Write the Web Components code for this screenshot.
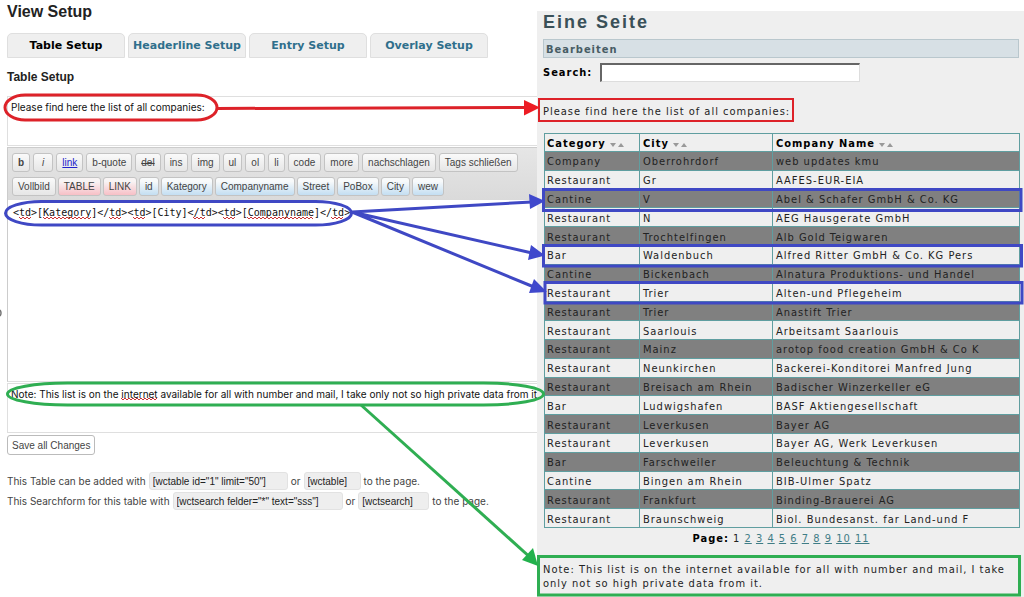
<!DOCTYPE html>
<html lang="en">
<head>
<meta charset="utf-8">
<title>View Setup</title>
<style>
  html, body { margin: 0; background: #fff; overflow-x: hidden; }
</style>
</head>
<body>
<setup-guide></setup-guide>
<script>
const define = (name, html, init) => {
  const tpl = document.createElement('template');
  tpl.innerHTML = html;
  customElements.define(name, class extends HTMLElement {
    constructor() {
      super();
      this.attachShadow({ mode: 'open' }).append(tpl.content.cloneNode(true));
    }
    connectedCallback() { if (init) init(this, this.shadowRoot); }
  });
};

define('setup-tab', `
<style>
  :host { display: block; flex: 0 0 118px; }
  a { display: block; box-sizing: border-box; height: 25px; text-align: center; white-space: nowrap;
      font: bold 11px/24px "DejaVu Sans", sans-serif; color: #2f6f8c; text-decoration: none;
      background: #efefef; border: 1px solid #dfdfdf; border-radius: 5px 5px 0 0; }
  :host([current]) a { color: #000; }
</style>
<a href="#"><slot></slot></a>`);

define('tag-button', `
<style>
  :host { display: block; }
  button { display: block; box-sizing: border-box; height: 19px; padding: 0 5px; margin: 0;
    font: 10px/16px "Liberation Sans", Arial, sans-serif; color: #444; white-space: nowrap;
    background: linear-gradient(#fafafa, #e6e6e6); border: 1px solid #c3c3c3; border-radius: 3px; }
  :host([kind=pink]) button { background: linear-gradient(#f8f4f4 20%, #f7bfc6); }
  :host([kind=blue]) button { background: linear-gradient(#f8fafb 20%, #c3def2); }
  :host([look=b]) button { font-weight: bold; }
  :host([look=i]) button { font-style: italic; padding: 0 8px; }
  :host([look=u]) button { text-decoration: underline; color: #2222cc; }
  :host([look=s]) button { text-decoration: line-through; }
</style>
<button type="button"><slot></slot></button>`);

define('tag-toolbar', `
<style>
  :host { display: flex; flex-direction: column; gap: 5px; padding: 5px 4px 4px; box-sizing: border-box;
    background: linear-gradient(#e6e6e6, #dadada); border-top: 1px solid #ccc; border-left: 1px solid #ccc; }
  div { display: flex; gap: 3px; }
  div + div { gap: 2px; }
</style>
<div><slot name="first"></slot></div>
<div><slot name="second"></slot></div>`);

define('shortcode-line', `
<style>
  :host { display: flex; align-items: center; height: 20px; font: 10px/18px Inter, sans-serif; color: #444; white-space: nowrap; }
  input { box-sizing: border-box; height: 18px; margin: 0 3px; padding: 0 3px; border: 1px solid #e2e2e2; border-radius: 3px;
    background: #eee; font: 10px "Liberation Sans", Arial, sans-serif; color: #222; min-width: 0; }
</style>
<label for="full"></label><input id="full" readonly><label for="short">or</label><input id="short" readonly><span>to the page.</span>`,
(el, root) => {
  const [full, short] = root.querySelectorAll('input');
  root.querySelector('label').textContent = el.getAttribute('text');
  full.value = el.getAttribute('full');
  short.value = el.getAttribute('short');
  full.style.width = el.getAttribute('full-width') + 'px';
  short.style.width = el.getAttribute('short-width') + 'px';
});

define('view-setup', `
<style>
  :host { display: block; padding: 2px 0 0 7px; min-width: 0; overflow: hidden; color: #333; }
  h1 { margin: 0 0 11px; font: bold 16px/20px "Liberation Sans", Arial, sans-serif; color: #222; }
  nav { display: flex; gap: 3px; }
  h2 { margin: 11px 0; font: bold 12px/16px "Liberation Sans", Arial, sans-serif; color: #222; }
  textarea { display: block; box-sizing: border-box; width: 100%; margin: 0; padding: 3px; resize: none; overflow: hidden;
    border: 1px solid #dfdfdf; border-right: 0; background: #fff; font: 10px/14px Inter, sans-serif; color: #111; white-space: nowrap; }
  .intro { height: 50px; margin-bottom: 1px; }
  .row { height: 182px; font: 10px/14px "DejaVu Sans Mono", monospace; padding: 6px 5px; border-top: 0; border-left: 1px solid #ccc; }
  .note { height: 50px; margin: 1px 0 2px; }
  .save { box-sizing: border-box; height: 20px; padding: 0 4px; border: 1px solid #bbb; border-radius: 3px; background: #fff;
    font: 10px "Liberation Sans", Arial, sans-serif; color: #444; margin: 0 0 16px; display: block; }
</style>
<h1>View Setup</h1>
<nav><setup-tab current>Table Setup</setup-tab><setup-tab>Headerline Setup</setup-tab><setup-tab>Entry Setup</setup-tab><setup-tab>Overlay Setup</setup-tab></nav>
<h2>Table Setup</h2>
<textarea class="intro" aria-label="Text before the table" spellcheck="false">Please find here the list of all companies:</textarea>
<tag-toolbar>
  <tag-button slot="first" look="b">b</tag-button><tag-button slot="first" look="i">i</tag-button><tag-button slot="first" look="u">link</tag-button><tag-button slot="first">b-quote</tag-button><tag-button slot="first" look="s">del</tag-button><tag-button slot="first">ins</tag-button><tag-button slot="first">img</tag-button><tag-button slot="first">ul</tag-button><tag-button slot="first">ol</tag-button><tag-button slot="first">li</tag-button><tag-button slot="first">code</tag-button><tag-button slot="first">more</tag-button><tag-button slot="first">nachschlagen</tag-button><tag-button slot="first">Tags schließen</tag-button>
  <tag-button slot="second">Vollbild</tag-button><tag-button slot="second" kind="pink">TABLE</tag-button><tag-button slot="second" kind="pink">LINK</tag-button><tag-button slot="second" kind="blue">id</tag-button><tag-button slot="second" kind="blue">Kategory</tag-button><tag-button slot="second" kind="blue">Companyname</tag-button><tag-button slot="second" kind="blue">Street</tag-button><tag-button slot="second" kind="blue">PoBox</tag-button><tag-button slot="second" kind="blue">City</tag-button><tag-button slot="second" kind="blue">wew</tag-button>
</tag-toolbar>
<textarea class="row" aria-label="Table row template" spellcheck="false">&lt;td>[Kategory]&lt;/td>&lt;td>[City]&lt;/td>&lt;td>[Companyname]&lt;/td></textarea>
<textarea class="note" aria-label="Text after the table" spellcheck="false">Note: This list is on the internet available for all with number and mail, I take only not so high private data from it</textarea>
<button class="save" type="button">Save all Changes</button>
<shortcode-line text="This Table can be added with" full='[wctable id="1" limit="50"]' short="[wctable]" full-width="139" short-width="57"></shortcode-line>
<shortcode-line text="This Searchform for this table with" full='[wctsearch felder="*" text="sss"]' short="[wctsearch]" full-width="170" short-width="71"></shortcode-line>`);

define('company-table', `
<style>
  :host { display: block; }
  table { width: 100%; height: 395px; table-layout: fixed; border-collapse: collapse; border: 1px solid #5f9ea0; }
  th, td { padding: 3px 0 0 3px; border: 1px solid #5f9ea0; text-align: left; white-space: nowrap; line-height: 14px; overflow: hidden; }
  td:first-child, th:first-child { padding-left: 2px; }
  th { color: #000; }
  tbody tr:nth-child(odd) { background: #808080; }
  col:nth-child(1) { width: 20%; }
  col:nth-child(2) { width: 28%; }
  svg { width: 14px; height: 5px; margin-left: 4px; fill: #999; vertical-align: 0; }
</style>
<table><colgroup><col><col><col></colgroup><thead><tr></tr></thead><tbody></tbody></table>`,
(el, root) => {
  const rows = [
    ['Company', 'Oberrohrdorf', 'web updates kmu'],
    ['Restaurant', 'Gr', 'AAFES-EUR-EIA'],
    ['Cantine', 'V', 'Abel & Schafer GmbH & Co. KG'],
    ['Restaurant', 'N', 'AEG Hausgerate GmbH'],
    ['Restaurant', 'Trochtelfingen', 'Alb Gold Teigwaren'],
    ['Bar', 'Waldenbuch', 'Alfred Ritter GmbH & Co. KG Pers'],
    ['Cantine', 'Bickenbach', 'Alnatura Produktions- und Handel'],
    ['Restaurant', 'Trier', 'Alten-und Pflegeheim'],
    ['Restaurant', 'Trier', 'Anastift Trier'],
    ['Restaurant', 'Saarlouis', 'Arbeitsamt Saarlouis'],
    ['Restaurant', 'Mainz', 'arotop food creation GmbH & Co K'],
    ['Restaurant', 'Neunkirchen', 'Backerei-Konditorei Manfred Jung'],
    ['Restaurant', 'Breisach am Rhein', 'Badischer Winzerkeller eG'],
    ['Bar', 'Ludwigshafen', 'BASF Aktiengesellschaft'],
    ['Restaurant', 'Leverkusen', 'Bayer AG'],
    ['Restaurant', 'Leverkusen', 'Bayer AG, Werk Leverkusen'],
    ['Bar', 'Farschweiler', 'Beleuchtung & Technik'],
    ['Cantine', 'Bingen am Rhein', 'BIB-Ulmer Spatz'],
    ['Restaurant', 'Frankfurt', 'Binding-Brauerei AG'],
    ['Restaurant', 'Braunschweig', 'Biol. Bundesanst. far Land-und F']
  ];
  root.querySelector('thead tr').innerHTML = ['Category', 'City', 'Company Name'].map(t =>
    `<th scope="col">${t}<svg viewBox="0 0 14 5" aria-hidden="true"><path d="M0 1h6L3 5zM8 5h6L11 1z"/></svg></th>`).join('');
  const body = root.querySelector('tbody');
  for (const cells of rows) {
    const tr = body.insertRow();
    for (const text of cells) tr.insertCell().textContent = text;
  }
});

define('page-preview', `
<style>
  :host { display: block; box-sizing: border-box; margin-top: 11px; padding: 0 5px 0 6px; min-width: 0; background: #efefef;
    font: 11px/16px "DejaVu Sans Condensed", "DejaVu Sans", sans-serif; letter-spacing: 1px; color: #222; }
  h1 { margin: 0 0 6px; font: bold 18px/22px "Liberation Sans", Arial, sans-serif; letter-spacing: 2px; color: #3a5058; }
  .edit { box-sizing: border-box; height: 19px; padding: 0 2px; border: 1px solid #b9c7cd; background: #d7e0e5; line-height: 20px; }
  .edit a { font-weight: bold; color: #475c64; text-decoration: none; }
  form { display: flex; align-items: center; gap: 8px; height: 19px; margin: 5px 0 22px; }
  label { font-weight: bold; color: #000; }
  input { box-sizing: border-box; width: 260px; height: 19px; margin: 0; border: 1px solid #ddd; border-top: 2px solid #666; border-left: 2px solid #666; background: #fff; }
  p { margin: 0; }
  .intro { margin-bottom: 13px; }
  company-table { margin-left: 1px; margin-right: -1px; }
  nav { margin: 3px 0 16px; text-align: center; }
  nav a { color: #3f7d86; }
  nav b { color: #000; }
  .note { line-height: 14px; padding-bottom: 4px; }
</style>
<h1>Eine Seite</h1>
<div class="edit"><a href="#">Bearbeiten</a></div>
<form><label for="search">Search:</label><input id="search" type="text"></form>
<p class="intro">Please find here the list of all companies:</p>
<company-table></company-table>
<nav aria-label="Pages"><b>Page:</b> 1 <a href="#">2</a> <a href="#">3</a> <a href="#">4</a> <a href="#">5</a> <a href="#">6</a> <a href="#">7</a> <a href="#">8</a> <a href="#">9</a> <a href="#">10</a> <a href="#">11</a></nav>
<p class="note">Note: This list is on the internet available for all with number and mail, I take only not so high private data from it.</p>`);

/* Markings that link each editor field to the part of the page it fills. */
define('link-overlay', `
<style>
  :host { position: absolute; inset: 0 0 auto 0; pointer-events: none; }
  svg { display: block; width: 100%; height: auto; fill: none; }
</style>
<svg viewBox="0 0 1024 597" aria-hidden="true">
  <path d="M0 310q2 3 0 6" stroke="#777" stroke-width="1.5"/>
  <g id="squiggles" stroke="#c33" stroke-width="1"></g>
  <g stroke="#dd2229" stroke-width="3">
    <rect x="5" y="95" width="212" height="25" rx="20" ry="12.5"/>
    <path d="M217 108.500L526 107.500"/>
    <rect x="539" y="99" width="254" height="22" stroke-width="2"/>
  </g>
  <path d="M524 100L540 107.500L524 115.500z" fill="#ed1c24"/>
  <g stroke="#3f48c4" stroke-width="3">
    <rect x="5.500" y="201.500" width="346" height="23.500" rx="36" ry="11.750"/>
    <path d="M352 212L532 202M352 212L532 253M352 212L534 287"/>
    <path d="M543.500 189.500H1021V210.500H543.500zM543.500 245.500H1021.500V266H543.500zM545 282.500H1022V303H545z"/>
  </g>
  <path d="M529 194L545 201L530 209zM531 245L545 255.500L528 260zM534 279L547 292L529 293z" fill="#3f48cc"/>
  <g stroke="#2fae52" stroke-width="3">
    <rect x="7.500" y="383" width="536" height="22" rx="60" ry="11"/>
    <path d="M361 405L532 559"/>
    <rect x="538.500" y="556.500" width="481" height="38.500"/>
  </g>
  <path d="M538 566L522 560L533 548z" fill="#22b14c"/>
</svg>`,
(el, root) => {
  const spans = [[19, 31, 217], [43, 91, 217], [109, 121, 217], [133, 145, 217], [193, 205, 217], [223, 235, 217], [247, 313, 217], [331, 343, 217], [121, 157, 398]];
  root.getElementById('squiggles').innerHTML = spans.map(([a, b, y]) => {
    let d = `M${a} ${y}`;
    for (let x = a + 2, up = false; x <= b; x += 2, up = !up) d += `L${x} ${up ? y : y + 2}`;
    return `<path d="${d}"/>`;
  }).join('');
});

define('setup-guide', `
<style>
  :host { display: grid; grid-template-columns: 537fr 487fr; position: relative; min-height: 100vh; }
</style>
<view-setup></view-setup>
<page-preview></page-preview>
<link-overlay></link-overlay>`);
</script>
</body>
</html>
